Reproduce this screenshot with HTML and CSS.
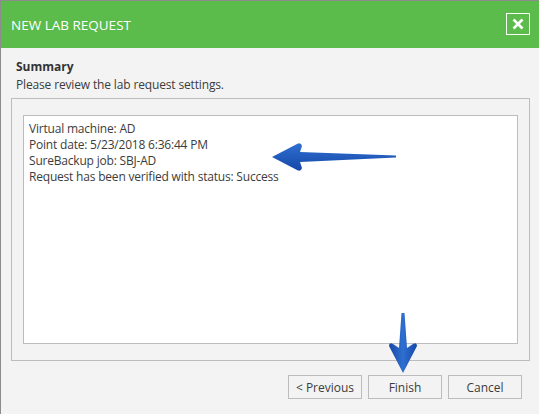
FILE: index.html
```html
<!DOCTYPE html>
<html>

<head>
  <meta name="viewport" content="width=device-width, initial-scale=1">
  <link rel="stylesheet" href="styles.css">
</head>

<body>
  <div class="dialog">
    <div class="titlebar">
      <span class="title">NEW LAB REQUEST</span>
      <a href="#" class="close">
        <svg width="14" height="14" viewBox="0 0 14 14">
          <path d="M2.5 2.5 L11.5 11.5 M11.5 2.5 L2.5 11.5" stroke="#fff" stroke-width="2.6" fill="none"/>
        </svg>
      </a>
    </div>

    <div class="step">
      <div class="step-title">Summary</div>
      <div class="step-desc">Please review the lab request settings.</div>
    </div>

    <div class="panel">
      <div class="summary">
        <div>Virtual machine: AD</div>
        <div>Point date: 5/23/2018 6:36:44 PM</div>
        <div>SureBackup job: SBJ-AD</div>
        <div>Request has been verified with status: Success</div>
      </div>
    </div>

    <div class="buttons">
      <button>&lt; Previous</button>
      <button>Finish</button>
      <button>Cancel</button>
    </div>

    <!-- callout arrows -->
    <svg class="arrow arrow-left" width="130" height="34" viewBox="0 0 130 34">
      <defs>
        <linearGradient id="gl" x1="0" y1="0" x2="0" y2="1">
          <stop offset="0" stop-color="#2f6fd0"/>
          <stop offset="1" stop-color="#1548a8"/>
        </linearGradient>
      </defs>
      <path d="M2 17 L27 4 Q31 2 32 6 L30 12 L126 15.5 L126 17.5 L30 22 L32 28 Q31 32 27 30 Z" fill="url(#gl)"/>
    </svg>

    <svg class="arrow arrow-down" width="34" height="64" viewBox="0 0 34 64">
      <defs>
        <linearGradient id="gd" x1="0" y1="0" x2="1" y2="0">
          <stop offset="0" stop-color="#1548a8"/>
          <stop offset="0.5" stop-color="#2f6fd0"/>
          <stop offset="1" stop-color="#1548a8"/>
        </linearGradient>
      </defs>
      <path d="M15.5 2 L18.5 2 L21 37 L27 33 Q31 31 31 35 L17 62 L3 35 Q3 31 7 33 L13 37 Z" fill="url(#gd)"/>
    </svg>
  </div>
</body>

</html>
```

FILE: styles.css
```css
/* ----------Dialog--------------- */
body {
  margin: 0px;
  padding: 0px;
  font-family: "Open Sans", "Noto Sans", Arial, sans-serif;
  font-size: 12px;
  color: #3c3c3c;
  background-color: #f3f3f3;
}

.dialog {
  position: relative;
  height: 413px;
  border-top: 1px solid #8c8c8c;
  border-left: 1px solid #8c8c8c;
  background-color: #f3f3f3;
}

.titlebar {
  display: flex;
  flex-direction: row;
  align-items: center;
  justify-content: space-between;
  height: 47px;
  padding: 0px 9px 0px 10px;
  background-color: #5bbb4b;
}

.title {
  color: #fff;
  font-size: 13.5px;
}

.close {
  display: flex;
  align-items: center;
  justify-content: center;
  width: 22px;
  height: 20px;
  border: 1px solid #fff;
  margin-top: -1px;
}

/* ------------------------------------------------- */

.step {
  padding: 10px 15px 0px 15px;
  height: 38px;
}

.step-title {
  font-weight: bold;
  color: #333;
  line-height: 17px;
}

.step-desc {
  line-height: 20px;
  letter-spacing: -0.15px;
}

.panel {
  margin: 2px 9px 0px 10px;
  padding: 16px 11px;
  height: 229px;
  border: 1px solid #bdbdbd;
}

.summary {
  height: 217px;
  padding: 5px 5px;
  border: 1px solid #bdbdbd;
  background-color: #fff;
  line-height: 16px;
  letter-spacing: -0.2px;
}

.buttons {
  display: flex;
  flex-direction: row;
  justify-content: flex-end;
  gap: 6px;
  padding: 14px 17px 0px 0px;
}

.buttons button {
  width: 74px;
  height: 24px;
  margin: 0px;
  border: 1px solid #bdbdbd;
  background-color: #f3f3f3;
  font-family: inherit;
  font-size: 12px;
  color: #3c3c3c;
}

/* ------------------------------------------------- */

.arrow {
  position: absolute;
}

.arrow-left {
  left: 269px;
  top: 139px;
}

.arrow-down {
  left: 385px;
  top: 310px;
}
```
